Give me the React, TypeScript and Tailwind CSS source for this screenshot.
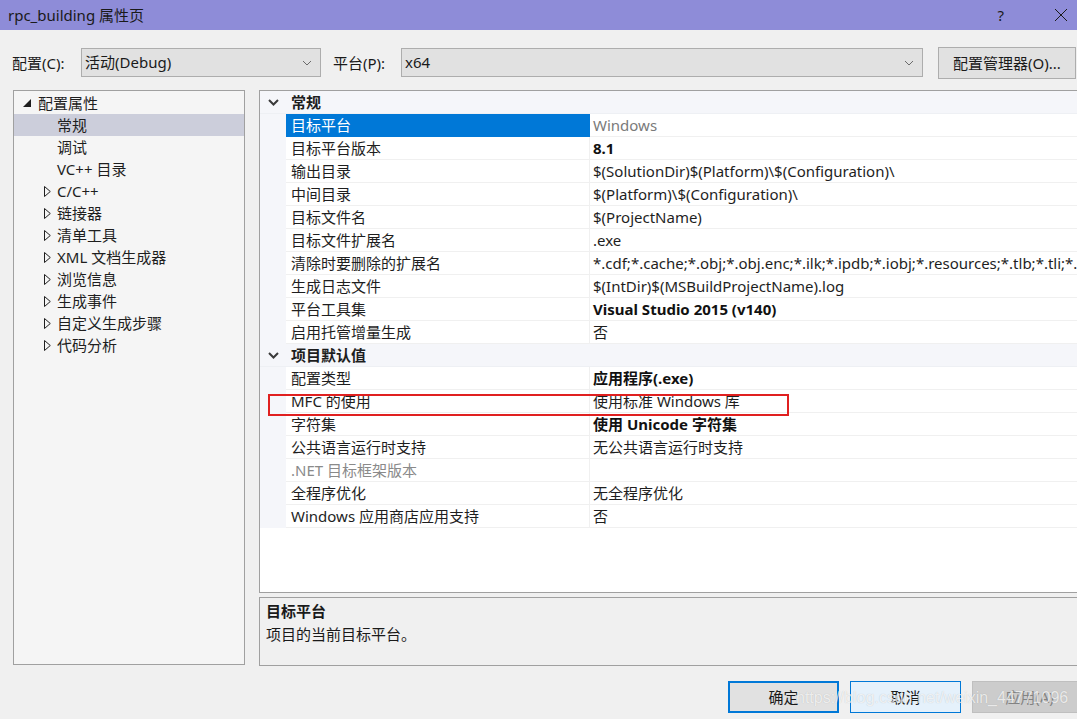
import React from "react";

const font = { fontFamily: '"Noto Sans", "Noto Sans CJK SC", sans-serif' };

type Row = { name: string; value: string; bold?: boolean; grayValue?: boolean; grayName?: boolean; selected?: boolean };

const general: Row[] = [
  { name: "目标平台", value: "Windows", grayValue: true, selected: true },
  { name: "目标平台版本", value: "8.1", bold: true },
  { name: "输出目录", value: "$(SolutionDir)$(Platform)\\$(Configuration)\\" },
  { name: "中间目录", value: "$(Platform)\\$(Configuration)\\" },
  { name: "目标文件名", value: "$(ProjectName)" },
  { name: "目标文件扩展名", value: ".exe" },
  { name: "清除时要删除的扩展名", value: "*.cdf;*.cache;*.obj;*.obj.enc;*.ilk;*.ipdb;*.iobj;*.resources;*.tlb;*.tli;*.tlh;*.tmp;*.rsp;*.pgc;*.pgd" },
  { name: "生成日志文件", value: "$(IntDir)$(MSBuildProjectName).log" },
  { name: "平台工具集", value: "Visual Studio 2015 (v140)", bold: true },
  { name: "启用托管增量生成", value: "否" },
];

const defaults: Row[] = [
  { name: "配置类型", value: "应用程序(.exe)", bold: true },
  { name: "MFC 的使用", value: "使用标准 Windows 库" },
  { name: "字符集", value: "使用 Unicode 字符集", bold: true },
  { name: "公共语言运行时支持", value: "无公共语言运行时支持" },
  { name: ".NET 目标框架版本", value: "", grayName: true },
  { name: "全程序优化", value: "无全程序优化" },
  { name: "Windows 应用商店应用支持", value: "否" },
];

const tree = [
  { label: "常规", leaf: true, selected: true },
  { label: "调试", leaf: true },
  { label: "VC++ 目录", leaf: true },
  { label: "C/C++" },
  { label: "链接器" },
  { label: "清单工具" },
  { label: "XML 文档生成器" },
  { label: "浏览信息" },
  { label: "生成事件" },
  { label: "自定义生成步骤" },
  { label: "代码分析" },
];

function SmallChevron() {
  return (
    <svg width="10" height="6" viewBox="0 0 10 6" className="shrink-0">
      <path d="M1 1 L5 5 L9 1" fill="none" stroke="#6b6b6b" strokeWidth="1" />
    </svg>
  );
}

function Select({ text, width }: { text: string; width: string }) {
  return (
    <div className={`${width} h-[29px] bg-[#e1e1e1] border border-[#adadad] flex items-center pl-[3px] pr-[8px]`}>
      <span className="flex-1 text-[15px] text-[#1a1a1a]">{text}</span>
      <SmallChevron />
    </div>
  );
}

function Category({ label }: { label: string }) {
  return (
    <div className="h-[23px] flex items-center bg-[#f5f6fa] border-b border-[#eef0f4]">
      <div className="w-[26px] flex justify-center">
        <svg width="11" height="7" viewBox="0 0 11 7">
          <path d="M1 1 L5.5 5.5 L10 1" fill="none" stroke="#3a3a3a" strokeWidth="2" />
        </svg>
      </div>
      <span className="pl-[5px] font-bold text-[15px] text-[#1e1e1e]">{label}</span>
    </div>
  );
}

function PropRow({ r }: { r: Row }) {
  return (
    <div className="h-[23px] flex">
      <div className="w-[26px] shrink-0 bg-[#f5f6fa]" />
      <div
        className={`w-[304px] shrink-0 flex items-center pl-[5px] border-b border-r ${
          r.selected ? "bg-[#0078d7] text-white border-[#0078d7]" : r.grayName ? "text-[#8a8a8a] border-[#f0f0f0]" : "text-[#1e1e1e] border-[#f0f0f0]"
        } text-[15px] whitespace-nowrap`}
      >
        {r.name}
      </div>
      <div
        className={`flex-1 flex items-center pl-[3px] border-b border-[#f0f0f0] text-[15px] whitespace-nowrap overflow-hidden ${
          r.bold ? "font-bold text-[#111]" : r.grayValue ? "text-[#7a7a7a]" : "text-[#1e1e1e]"
        }`}
      >
        {r.value}
      </div>
    </div>
  );
}

export default function App() {
  return (
    <div className="w-[1077px] h-[719px] bg-[#f0f0f0] flex flex-col overflow-hidden relative" style={font}>
      {/* title bar */}
      <div className="h-[30px] bg-[#8e8cd8] flex items-center shrink-0">
        <span className="pl-[8px] text-[15px] text-[#1a1a1a] flex-1">rpc_building 属性页</span>
        <span className="text-[15px] text-[#1a1a1a] mr-[50px]">?</span>
        <svg width="14" height="14" viewBox="0 0 14 14" className="mr-[9px]">
          <path d="M1 1 L13 13 M13 1 L1 13" stroke="#1a1a1a" strokeWidth="1" />
        </svg>
      </div>

      {/* config row */}
      <div className="h-[60px] flex items-start pt-[17px] shrink-0">
        <span className="ml-[12px] w-[69px] h-[32px] flex items-center text-[15px] text-[#1a1a1a]">配置(C):</span>
        <div className="mt-[1px]">
          <Select text="活动(Debug)" width="w-[240px]" />
        </div>
        <span className="ml-[12px] w-[68px] h-[32px] flex items-center text-[15px] text-[#1a1a1a]">平台(P):</span>
        <div className="mt-[1px]">
          <Select text="x64" width="w-[522px]" />
        </div>
        <button className="ml-[15px] w-[138px] h-[32px] bg-[#e1e1e1] border border-[#adadad] text-[15px] text-[#1a1a1a]">
          配置管理器(O)...
        </button>
      </div>

      {/* main */}
      <div className="flex pl-[13px] gap-[14px] shrink-0">
        {/* tree */}
        <div className="w-[232px] shrink-0 h-[575px] bg-[#f5f5f5] border border-[#a0a0a0] pt-[1px]">
          <div className="h-[22px] flex items-center">
            <svg width="8" height="8" viewBox="0 0 8 8" className="ml-[9px]">
              <polygon points="8,0 8,8 0,8" fill="#1e1e1e" />
            </svg>
            <span className="ml-[7px] text-[15px] text-[#1e1e1e]">配置属性</span>
          </div>
          {tree.map((t) => (
            <div key={t.label} className={`h-[22px] flex items-center ${t.selected ? "bg-[#cccedb]" : ""}`}>
              <div className="w-[43px] flex justify-end pr-[6px]">
                {!t.leaf && (
                  <svg width="7" height="11" viewBox="0 0 7 11">
                    <polygon points="0.5,0.5 6.3,5.5 0.5,10.5" fill="none" stroke="#1e1e1e" strokeWidth="1" />
                  </svg>
                )}
              </div>
              <span className="text-[15px] text-[#1e1e1e] whitespace-nowrap">{t.label}</span>
            </div>
          ))}
        </div>

        {/* right column */}
        <div className="w-[830px] shrink-0 flex flex-col gap-[4px]">
          <div className="h-[503px] bg-white border border-[#a0a0a0] relative overflow-hidden">
            <Category label="常规" />
            {general.map((r) => (
              <PropRow key={r.name} r={r} />
            ))}
            <Category label="项目默认值" />
            {defaults.map((r) => (
              <PropRow key={r.name} r={r} />
            ))}
            <div className="absolute left-[8px] top-[303px] w-[521px] h-[22px] border-2 border-[#e02020]" />
          </div>
          <div className="h-[69px] bg-[#f0f0f0] border border-[#a0a0a0] px-[6px] pt-[2px]">
            <div className="text-[15px] font-bold text-[#1a1a1a] leading-[22px]">目标平台</div>
            <div className="text-[15px] text-[#1a1a1a] leading-[24px]">项目的当前目标平台。</div>
          </div>
        </div>
      </div>

      {/* buttons */}
      <div className="flex justify-end gap-[11px] mt-[15px] mr-[-10px]">
        <button className="w-[111px] h-[32px] bg-[#e1e1e1] border-2 border-[#0078d7] text-[15px] text-[#1a1a1a]">确定</button>
        <button className="w-[111px] h-[32px] bg-[#e5f1fb] border border-[#0078d7] text-[15px] text-[#1a1a1a]">取消</button>
        <button className="w-[115px] h-[32px] bg-[#cccccc] border border-[#bfbfbf] text-[15px] text-[#838383]">应用(A)</button>
      </div>

      {/* watermark */}
      <div className="absolute left-[796px] top-[686px] text-[16px] text-white/75 whitespace-nowrap [text-shadow:0_0_1px_rgba(0,0,0,0.2)]" style={{ fontFamily: '"Liberation Sans", Arial, sans-serif' }}>
        https://blog.csdn.net/weixin_44771096
      </div>
    </div>
  );
}
